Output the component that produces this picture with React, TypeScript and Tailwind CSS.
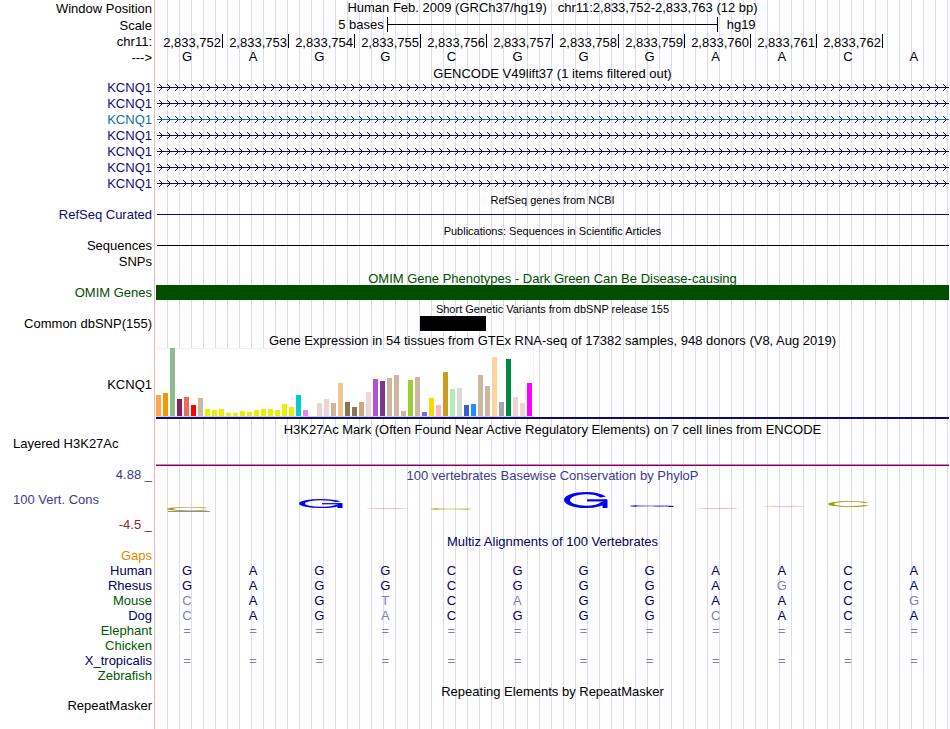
import type { ReactNode } from 'react';

const BASES = 'GAGGCGGGAACA'.split('');
const POSITIONS = [752, 753, 754, 755, 756, 757, 758, 759, 760, 761, 762];

const genes = [
  'text-[#0c0c78]',
  'text-[#0c0c78]',
  'text-[#0c72a8]',
  'text-[#0c0c78]',
  'text-[#0c0c78]',
  'text-[#0c0c78]',
  'text-[#0c0c78]',
];

// GTEx tissues: height in px, fill colour
const tissues: [number, string][] = [
  [21, '#ffa54f'], [23, '#ee9a00'], [68, '#8fbc8f'], [17, '#8b1c62'], [19, '#ee6a50'], [11, '#ff0000'],
  [18, '#cdb79e'], [7, '#eeee00'], [6, '#eeee00'], [7, '#eeee00'], [3, '#eeee00'], [3, '#eeee00'],
  [5, '#eeee00'], [4, '#eeee00'], [6, '#eeee00'], [7, '#eeee00'], [7, '#eeee00'], [6, '#eeee00'],
  [12, '#eeee00'], [9, '#eeee00'], [21, '#00cdcd'], [6, '#ee82ee'], [0, '#9ac0cd'], [13, '#eed5d2'],
  [17, '#eed5d2'], [13, '#cdb79e'], [33, '#eec591'], [14, '#8b7355'], [9, '#8b7355'], [14, '#cdaa7d'],
  [24, '#eed5d2'], [37, '#b452cd'], [35, '#7a378b'], [38, '#cdb79e'], [41, '#cdb79e'], [5, '#cdb79e'],
  [36, '#9acd32'], [39, '#cdb79e'], [4, '#7a67ee'], [18, '#ffd700'], [11, '#ffb6c1'], [44, '#cd9b1d'],
  [27, '#b4eeb4'], [28, '#d9d9d9'], [11, '#3a5fcd'], [12, '#1e90ff'], [41, '#cdb79e'], [30, '#cdb79e'],
  [59, '#ffd39b'], [14, '#a6a6a6'], [57, '#008b45'], [19, '#eed5d2'], [13, '#eed5d2'], [33, '#ff00ff'],
];

// lower case marks a base that differs from human
const species = [
  { name: 'Human', color: 'text-[#000064]', seq: 'GAGGCGGGAACA' },
  { name: 'Rhesus', color: 'text-[#000064]', seq: 'GAGGCGGGAgCA' },
  { name: 'Mouse', color: 'text-[#005a00]', seq: 'cAGtCaGGAACg' },
  { name: 'Dog', color: 'text-[#000064]', seq: 'cAGaCGGGcACA' },
  { name: 'Elephant', color: 'text-[#005a00]', seq: '============' },
  { name: 'Chicken', color: 'text-[#005a00]', seq: '' },
  { name: 'X_tropicalis', color: 'text-[#000064]', seq: '============' },
  { name: 'Zebrafish', color: 'text-[#005a00]', seq: '' },
];

type RowProps = { label?: ReactNode; labelClass?: string; className?: string; children?: ReactNode };

const Row = ({ label, labelClass = 'leading-4', className = 'h-4', children }: RowProps) => (
  <div className={`flex ${className}`}>
    <div className={`mr-px w-[155px] shrink-0 whitespace-nowrap border-r border-[#ffb4b4] pr-0.5 text-right ${labelClass}`}>
      {label}
    </div>
    <div className="mr-px min-w-0 flex-1 bg-[repeating-linear-gradient(90deg,transparent_0_11px,#dcdcf8_11px_12px)]">
      {children}
    </div>
  </div>
);

const Title = ({ children, className = 'leading-[15px]' }: { children: ReactNode; className?: string }) => (
  <h2 className={`whitespace-nowrap text-center ${className}`}>{children}</h2>
);

const SeqRow = ({ seq, className = '' }: { seq: string[]; className?: string }) => (
  <div className={`grid grid-cols-12 text-center leading-[15px] ${className}`}>
    {seq.map((base, i) => (
      <span key={i} className={/[a-z=]/.test(base) ? 'pr-1 text-[#8080b2]' : 'pr-1'}>{base.toUpperCase()}</span>
    ))}
  </div>
);

const Chevrons = () => (
  <svg className="block h-[15px] w-full" aria-hidden="true">
    <defs>
      <pattern id="chevrons" width="8" height="15" patternUnits="userSpaceOnUse">
        <path d="M3 4 L6.5 7.5 L3 11" fill="none" stroke="currentColor" strokeWidth="1" />
      </pattern>
    </defs>
    <rect width="100%" height="15" fill="url(#chevrons)" />
    <rect x="1" y="7" width="100%" height="1" fill="currentColor" />
  </svg>
);

// One mark of the conservation logo, stretched to the height of its score
const LogoMark = ({ kind, color, height }: { kind: string; color: string; height: number }) => (
  <svg viewBox="0 0 44 44" preserveAspectRatio="none" width="44" height={height} fill="none" stroke={color} strokeWidth="6" aria-hidden="true">
    {kind === 'A' && (
      <>
        <line x1="2" y1="44" x2="22" y2="0" />
        <line x1="42" y1="44" x2="22" y2="0" />
        <line x1="10" y1="28" x2="34" y2="28" />
      </>
    )}
    {kind === 'C' && (
      <ellipse cx="22" cy="22" rx="19" ry="19" pathLength="100" strokeDasharray="84 16" strokeDashoffset="-8" />
    )}
    {kind === 'G' && (
      <>
        <ellipse cx="22" cy="22" rx="19" ry="19" pathLength="100" strokeDasharray="88 12" strokeDashoffset="-5" />
        <line x1="23" y1="23" x2="43" y2="23" />
        <line x1="41" y1="21" x2="41" y2="44" strokeWidth="5" />
      </>
    )}
  </svg>
);

const logo = [
  { kind: 'C', color: '#a0a000', height: 4, pad: 'pt-6', underline: true },
  null,
  { kind: 'G', color: '#0000ff', height: 9, pad: 'pt-4' },
  { kind: 'A', color: '#ff5050', height: 1, pad: 'pt-[25px]' },
  { kind: 'C', color: '#a0a000', height: 2, pad: 'pt-[25px]' },
  null,
  { kind: 'G', color: '#0000ff', height: 16, pad: 'pt-[9px]' },
  { kind: 'G', color: '#0000ff', height: 2, pad: 'pt-[22px]' },
  { kind: 'A', color: '#ff5050', height: 1, pad: 'pt-[25px]' },
  { kind: 'A', color: '#ff5050', height: 1, pad: 'pt-[23px]' },
  { kind: 'C', color: '#a0a000', height: 6, pad: 'pt-[18px]' },
  null,
];

export default function App() {
  return (
    <main className="flex min-h-screen flex-col overflow-hidden bg-white font-['Liberation_Sans',Arial,sans-serif] text-[13px] text-black">
      <Row label="Window Position" labelClass="leading-[17px]" className="h-[17px]">
        <h1 className="whitespace-pre text-center leading-[15px]">
          {'Human Feb. 2009 (GRCh37/hg19)   chr11:2,833,752-2,833,763 (12 bp)'}
        </h1>
      </Row>
      <Row label="Scale" labelClass="leading-[17px]" className="h-[17px]">
        <div className="flex pl-px leading-[15px]">
          <span className="w-[29%] pr-[3px] text-right">5 bases</span>
          <span className="flex h-[15px] w-[331px] items-center border-x border-black">
            <span className="h-px w-full bg-black" />
          </span>
          <span className="pl-[9px]">hg19</span>
        </div>
      </Row>
      <Row label="chr11:" labelClass="leading-[15px]" className="h-[15px]">
        <div className="ml-px grid grid-cols-12 text-right leading-[18px]">
          {POSITIONS.map((p) => (
            <span key={p} className="h-3.5 border-r border-black pr-px">2,833,{p}</span>
          ))}
        </div>
      </Row>
      <Row label="--->" labelClass="leading-[17px]" className="h-[17px]">
        <SeqRow seq={BASES} />
      </Row>

      <Row className="h-3.5"><Title>GENCODE V49lift37 (1 items filtered out)</Title></Row>
      {genes.map((color, i) => (
        <Row key={i} label="KCNQ1" labelClass={`leading-4 ${color}`}>
          <div className={color}><Chevrons /></div>
        </Row>
      ))}

      <Row className="h-[15px]"><Title className="text-[11px] leading-[17px]">RefSeq genes from NCBI</Title></Row>
      <Row label="RefSeq Curated" labelClass="leading-4 text-[#0c0c78]">
        <div className="ml-px pt-[7px]"><div className="h-px bg-[#0c0c78]" /></div>
      </Row>

      <Row className="h-[15px]"><Title className="text-[11px] leading-[17px]">Publications: Sequences in Scientific Articles</Title></Row>
      <Row label="Sequences">
        <div className="ml-px pt-[7px]"><div className="h-px bg-black" /></div>
      </Row>
      <Row label="SNPs" />

      <Row className="h-[15px]">
        <Title className="leading-[17px] text-[#005000]">OMIM Gene Phenotypes - Dark Green Can Be Disease-causing</Title>
      </Row>
      <Row label="OMIM Genes" labelClass="leading-4 text-[#005000]">
        <div className="h-[15px] bg-[#005000]" />
      </Row>

      <Row className="h-[15px]"><Title className="text-[11px] leading-[17px]">Short Genetic Variants from dbSNP release 155</Title></Row>
      <Row label="Common dbSNP(155)">
        <div className="grid grid-cols-12">
          <div className="col-start-5 h-[15px] bg-black" />
        </div>
      </Row>

      <Row className="h-[15px]">
        <Title className="leading-[17px]">Gene Expression in 54 tissues from GTEx RNA-seq of 17382 samples, 948 donors (V8, Aug 2019)</Title>
      </Row>
      <Row label="KCNQ1" labelClass="leading-[75px]" className="h-[75px]">
        <div className="border-b-2 border-[#0c0c78] pt-px">
          <div className="flex h-[69px] w-[378px] items-end gap-0.5 border-b border-[#d3d3d3] bg-white shadow-[inset_-1px_1px_#f2f2f2]">
            {tissues.map(([height, color], i) => (
              <div key={i} className="w-[5px] shrink-0" style={{ height, backgroundColor: color }} />
            ))}
          </div>
        </div>
      </Row>

      <Row className="h-[15px]">
        <Title>H3K27Ac Mark (Often Found Near Active Regulatory Elements) on 7 cell lines from ENCODE</Title>
      </Row>
      <Row label={<span className="block pl-[13px] text-left">Layered H3K27Ac</span>} labelClass="leading-[13px]" className="h-[31px]">
        <div className="pt-[27px]"><div className="h-0.5 border-b border-[#64144b] bg-[#ff64c8]" /></div>
      </Row>

      <Row label="4.88 _" labelClass="leading-[13px] text-[#3c3c8c]" className="h-[15px]">
        <Title className="leading-[15px] text-[#3c3c8c]">100 vertebrates Basewise Conservation by PhyloP</Title>
      </Row>
      <Row
        label={
          <div className="flex h-full flex-col justify-between pt-[9px] pb-0.5">
            <span className="pl-[13px] text-left text-[#3c3c8c]">100 Vert. Cons</span>
            <span className="text-[#8c2828]">-4.5 _</span>
          </div>
        }
        labelClass="leading-[15px]"
        className="h-[51px]"
      >
        <div className="grid grid-cols-12">
          {logo.map((mark, i) => (
            <div key={i} className={`flex flex-col items-center ${mark ? mark.pad : ''}`}>
              {mark && <LogoMark kind={mark.kind} color={mark.color} height={mark.height} />}
              {mark?.underline && <div className="h-px w-[42px] bg-[#8c8cb4]" />}
            </div>
          ))}
        </div>
      </Row>

      <Row className="h-3.5"><Title className="leading-[15px] text-[#000064]">Multiz Alignments of 100 Vertebrates</Title></Row>
      <Row label="Gaps" labelClass="leading-[15px] text-[#e68200]" className="h-[15px]" />
      {species.map((s) => (
        <Row key={s.name} label={s.name} labelClass={`leading-[15px] ${s.color}`} className="h-[15px]">
          <SeqRow seq={s.seq.split('')} className="text-[#000064]" />
        </Row>
      ))}

      <Row className="h-[15px]"><Title className="leading-[17px]">Repeating Elements by RepeatMasker</Title></Row>
      <Row label="RepeatMasker" labelClass="leading-[15px]" className="flex-1" />
    </main>
  );
}
